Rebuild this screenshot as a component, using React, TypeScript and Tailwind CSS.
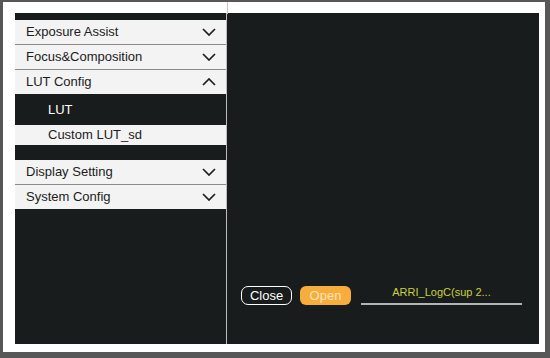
import { ReactNode } from "react";

const Chevron = ({ up = false }: { up?: boolean }) => (
  <svg width="14" height="8" viewBox="0 0 14 8" className="shrink-0">
    <path
      d={up ? "M1 7 L7 1 L13 7" : "M1 1 L7 7 L13 1"}
      fill="none"
      stroke="#1e1e1e"
      strokeWidth="1.7"
    />
  </svg>
);

const MenuRow = ({ label, up, last }: { label: string; up?: boolean; last?: boolean }) => (
  <div
    className={`flex items-center justify-between bg-[#f3f3f3] pl-[11px] pr-[10px] text-[13px] text-[#1c1c1c] ${
      last ? "h-[24px]" : "h-[25px] border-b border-[#8a8a8a]"
    }`}
  >
    <span>{label}</span>
    <Chevron up={up} />
  </div>
);

const SubItem = ({ children, light }: { children: ReactNode; light?: boolean }) => (
  <div
    className={`flex items-center pl-[33px] text-[13px] ${
      light ? "h-[20px] bg-[#f3f3f3] text-[#1c1c1c]" : "h-[31px] text-white"
    }`}
  >
    {children}
  </div>
);

export default function App() {
  return (
    <div
      className="relative h-[358px] w-[550px] border-b-[6px] border-l-[3px] border-r-[5px] border-t-[2px] border-[#575757] bg-white pb-[8px] pl-[12px] pr-[6px] pt-[11px]"
      style={{ fontFamily: '"Liberation Sans", Arial, sans-serif' }}
    >
      <div className="absolute left-[224px] top-0 h-[12px] w-px bg-[#c8c8c8]" />
      <div className="flex h-full bg-[#191c1c]">
        {/* left menu */}
        <div className="flex w-[212px] flex-col border-r border-[#bdbdbd] pt-[7px]">
          <MenuRow label="Exposure Assist" />
          <MenuRow label="Focus&Composition" />
          <MenuRow label="LUT Config" up last />
          <SubItem>LUT</SubItem>
          <SubItem light>Custom LUT_sd</SubItem>
          <div className="h-[15px]" />
          <MenuRow label="Display Setting" />
          <MenuRow label="System Config" last />
        </div>

        {/* right panel */}
        <div className="flex flex-1 flex-col justify-end pb-[39px] pl-[14px]">
          <div className="flex items-center">
            <button className="flex h-[19px] w-[51px] items-center justify-center rounded-[7px] border-[1.5px] border-white text-[13px] leading-none text-white">
              Close
            </button>
            <button className="ml-[8px] flex h-[19px] w-[51px] items-center justify-center rounded-[6px] bg-[#f7ad3c] text-[13px] leading-none text-[#fde3b8]">
              Open
            </button>
            <div className="ml-[10px] flex w-[161px] flex-col items-center">
              <span className="text-[11px] leading-none text-[#c8d13c]">ARRI_LogC(sup 2...</span>
              <div className="mt-[5px] h-[2px] w-full bg-[#b5b5b5]" />
            </div>
          </div>
        </div>
      </div>
    </div>
  );
}
